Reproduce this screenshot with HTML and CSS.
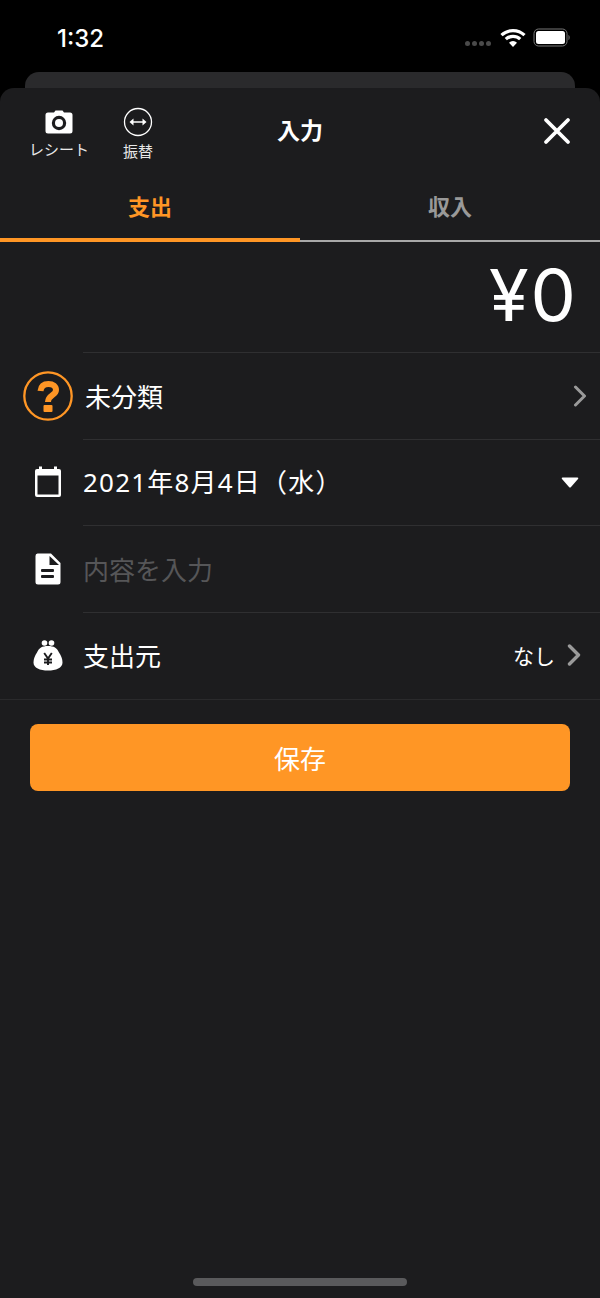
FILE: index.html
```html
<!DOCTYPE html>
<html lang="ja">
<head>
<meta charset="utf-8">
<title>入力</title>
<link rel="stylesheet" href="styles.css">
</head>
<body>
<div class="phone">
  <div class="status">
    <span class="time">1:32</span>
    <div class="status-icons">
      <div class="dots"><i></i><i></i><i></i><i></i></div>
      <svg class="wifi" width="26" height="20" viewBox="0 0 26 20"><path d="M1.500 7.200A16.500 16.500 0 0 1 24.500 7.200" fill="none" stroke="#fff" stroke-width="3.200"/><path d="M5.800 11.200A10.500 10.500 0 0 1 20.200 11.200" fill="none" stroke="#fff" stroke-width="3.200"/><path d="M9 14.700L13 19L17 14.700A5.600 5.600 0 0 0 9 14.700Z" fill="#fff"/></svg>
      <svg class="battery" width="38" height="20" viewBox="0 0 38 20"><rect x="1" y="1" width="33" height="17" rx="4.500" fill="none" stroke="#777" stroke-width="1"/><rect x="3" y="3" width="29" height="13" rx="2.500" fill="#fff"/><path d="M35.500 7C37 7.500 37 11.500 35.500 12Z" fill="#777"/></svg>
    </div>
  </div>
  <div class="back-card"></div>
  <main class="sheet">
    <header class="head">
      <div class="head-actions">
        <div class="action action-receipt">
          <svg width="30" height="26" viewBox="0 0 30 26"><path d="M10 3.500L11.500 1.500H18.500L20 3.500H26A2.500 2.500 0 0 1 28.500 6V22A2.500 2.500 0 0 1 26 24.500H4A2.500 2.500 0 0 1 1.500 22V6A2.500 2.500 0 0 1 4 3.500Z" fill="#fff"/><circle cx="15" cy="14" r="7.200" fill="#1c1c1e"/><circle cx="15" cy="14" r="4" fill="#fff"/></svg>
          <span>レシート</span>
        </div>
        <div class="action action-transfer">
          <svg width="30" height="30" viewBox="0 0 30 30"><circle cx="15" cy="15" r="13.500" fill="none" stroke="#fff" stroke-width="1.300"/><path d="M9 15H21" stroke="#fff" stroke-width="1.500"/><path d="M10.500 11.500L6.500 15L10.500 18.500ZM19.500 11.500L23.500 15L19.500 18.500Z" fill="#fff"/></svg>
          <span>振替</span>
        </div>
      </div>
      <h1 class="title">入力</h1>
      <svg class="close" width="28" height="28" viewBox="0 0 28 28"><path d="M3 3L25 25M25 3L3 25" stroke="#fff" stroke-width="3.800" stroke-linecap="round"/></svg>
    </header>
    <nav class="tabs">
      <div class="tab tab-active">支出</div>
      <div class="tab">収入</div>
    </nav>
    <div class="amount">¥0</div>
    <div class="row row-line">
      <div class="row-icon">
        <svg class="icon-q" width="50" height="50" viewBox="0 0 50 50"><circle cx="25" cy="25" r="23.700" fill="none" stroke="#ff9625" stroke-width="2.300"/><path d="M17.500 20C18 15 21 13 25.500 13C30 13 33 15.500 33 19C33 24.500 25 24 25 31" fill="none" stroke="#ff9625" stroke-width="6"/><rect x="20.500" y="34" width="9" height="7" rx="1" fill="#ff9625"/></svg>
      </div>
      <span class="row-text text-cat">未分類</span>
      <svg class="chev chev-cat" width="14" height="22" viewBox="0 0 14 22"><path d="M2.500 2L11.500 11L2.500 20" fill="none" stroke="#9a9a9a" stroke-width="3" stroke-linecap="round" stroke-linejoin="round"/></svg>
    </div>
    <div class="row row-line">
      <div class="row-icon">
        <svg width="28" height="32" viewBox="0 0 28 32"><path d="M3 3H25A2 2 0 0 1 27 5V29A2 2 0 0 1 25 31H3A2 2 0 0 1 1 29V5A2 2 0 0 1 3 3Z" fill="#fff"/><rect x="3.500" y="9.500" width="21" height="19" fill="#1c1c1e"/><rect x="5" y="0.500" width="3" height="4" fill="#fff"/><rect x="20" y="0.500" width="3" height="4" fill="#fff"/></svg>
      </div>
      <span class="row-text text-date">2021年8月4日（水）</span>
      <svg class="caret" width="18" height="11" viewBox="0 0 18 11"><path d="M1.500 0.500H16.500Q18 0.500 17 2L10 10Q9 11 8 10L1 2Q0 0.500 1.500 0.500Z" fill="#fff"/></svg>
    </div>
    <div class="row row-line">
      <div class="row-icon">
        <svg width="26" height="32" viewBox="0 0 26 32"><path d="M2.500 0.500H16L25.500 10V29A2.500 2.500 0 0 1 23 31.500H3A2.500 2.500 0 0 1 0.500 29V3A2.500 2.500 0 0 1 2.500 0.500Z" fill="#fff"/><path d="M14.500 3V12H24Z" fill="#1c1c1e"/><rect x="6" y="16" width="13" height="3" rx="1" fill="#1c1c1e"/><rect x="6" y="22" width="13" height="3" rx="1" fill="#1c1c1e"/></svg>
      </div>
      <span class="row-text text-muted">内容を入力</span>
    </div>
    <div class="row row-last">
      <div class="row-icon">
        <svg width="30" height="31" viewBox="0 0 30 31"><circle cx="11.500" cy="3" r="2.800" fill="#fff"/><circle cx="18.500" cy="3" r="2.800" fill="#fff"/><path d="M15 6C21 6 24 8 26 12.500C28 15.500 29.500 18.500 29.500 22.500C29.500 28 23 30.500 15 30.500C7 30.500 0.500 28 0.500 22.500C0.500 18.500 2 15.500 4 12.500C6 8 9 6 15 6Z" fill="#fff"/><path d="M11.200 13L15 18.500L18.800 13M15 18.500V25M11 19.500H19M11 22.500H19" fill="none" stroke="#1c1c1e" stroke-width="1.900"/></svg>
      </div>
      <span class="row-text">支出元</span>
      <span class="row-value">なし</span>
      <svg class="chev chev-src" width="14" height="22" viewBox="0 0 14 22"><path d="M2.500 2L11.500 11L2.500 20" fill="none" stroke="#9a9a9a" stroke-width="3.400" stroke-linecap="round" stroke-linejoin="round"/></svg>
    </div>
    <div class="save-wrap"><button class="save">保存</button></div>
    <div class="home-bar"></div>
  </main>
</div>
</body>
</html>
```

FILE: styles.css
```css
* { box-sizing: border-box; }
html, body { margin: 0; padding: 0; background: #000; }
body { font-family: "Noto Sans CJK JP", "Liberation Sans", sans-serif; color: #fff; }
.phone { width: 600px; height: 1298px; display: flex; flex-direction: column; overflow: hidden; }
.status { height: 72px; flex: none; display: flex; justify-content: space-between; padding: 22px 29px 0 57px; }
.time { font-family: Inter, "Liberation Sans", sans-serif; font-size: 24px; font-weight: 500; line-height: 32px; margin-top: 1px; }
.status-icons { display: flex; align-items: flex-start; height: 32px; }
.dots { display: flex; gap: 2px; margin: 19px 9px 0 0; }
.dots i { width: 5px; height: 5px; border-radius: 50%; background: #4a4a4a; }
.wifi { margin-top: 6px; margin-right: 7px; }
.battery { margin-top: 6px; }
.back-card { flex: none; height: 16px; margin: 0 25px; background: #2a2a2c; border-radius: 14px 14px 0 0; }
.sheet { flex: 1; background: #1c1c1e; border-radius: 14px 14px 0 0; display: flex; flex-direction: column; position: relative; }
.head { height: 88px; flex: none; display: flex; align-items: flex-start; justify-content: space-between; position: relative; padding: 0 29px 0 0; }
.head-actions { display: flex; }
.action { display: flex; flex-direction: column; align-items: center; font-size: 15px; line-height: 18px; color: #e8e8e8; }
.action-receipt { width: 90px; margin-left: 14px; padding-top: 21px; }
.action-receipt span { margin-top: 5px; white-space: nowrap; }
.action-transfer { width: 60px; margin-left: 4px; padding-top: 19px; }
.action-transfer span { margin-top: 5px; }
.title { position: absolute; left: 0; right: 0; top: 25px; margin: 0; text-align: center; font-size: 23px; line-height: 32px; font-weight: 700; }
.close { margin-top: 29px; }
.tabs { height: 66px; flex: none; display: flex; }
.tab { width: 300px; text-align: center; font-size: 22px; font-weight: 700; line-height: 30px; padding-top: 14px; color: #999; border-bottom: 2px solid #a8a8a8; }
.tab-active { color: #ff9625; border-bottom: 4px solid #ff9625; }
.amount { height: 111px; flex: none; text-align: right; padding-right: 22px; letter-spacing: 2px; font-family: Inter, "Noto Sans", sans-serif; font-size: 72px; line-height: 106px; font-weight: 400; }
.row { height: 86.6px; flex: none; display: flex; align-items: center; position: relative; padding: 0 20px 1px 83px; }
.row-line::before, .row-last::before { content: ""; position: absolute; left: 83px; right: 0; top: -1px; height: 1px; background: #2f2f31; }
.row-last { border-bottom: 1px solid #2a2a2c; height: 87.4px; }
.row-icon { position: absolute; left: 0; top: 0; bottom: 1px; width: 96px; display: flex; align-items: center; justify-content: center; }
.row-text { font-size: 26px; line-height: 36px; flex: 1; }
.text-cat { margin-left: 2px; }
.text-date { font-family: "Noto Sans", "Noto Sans CJK JP", sans-serif; letter-spacing: 1.2px; }
.text-muted { color: #565658; }
.row-value { font-size: 21px; margin-right: 12px; }
.chev-cat { margin-right: -7px; }
.chev-src { margin-right: -1px; }
.caret { margin-right: 1px; }
.save-wrap { padding: 24px 30px 0; }
.save { width: 540px; height: 67px; background: #ff9625; border: 0; border-radius: 8px; color: #fff; font: 400 26px/36px "Noto Sans CJK JP", sans-serif; padding: 0; }
.home-bar { position: absolute; left: 193px; top: 1190px; width: 214px; height: 8px; border-radius: 4px; background: #5a5a5c; }
```
